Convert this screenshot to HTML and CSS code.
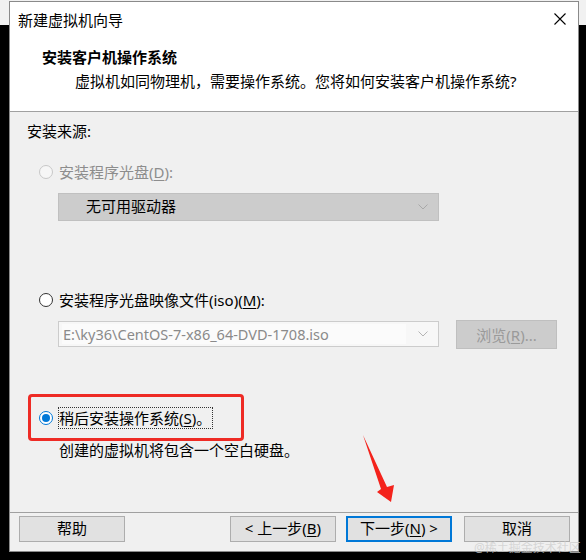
FILE: index.html
```html
<!DOCTYPE html>
<html lang="zh-CN">
<head>
<meta charset="utf-8">
<title>新建虚拟机向导</title>
<link rel="stylesheet" href="styles.css">
</head>
<body>
<div class="dialog">
  <div class="titlebar">
    <span class="title-text">新建虚拟机向导</span>
    <svg class="close" width="12" height="12" viewBox="0 0 12 12"><path d="M0.5 0.5 L11.5 11.5 M11.5 0.5 L0.5 11.5" stroke="#000" stroke-width="1.1" fill="none"/></svg>
  </div>
  <div class="header">
    <div class="h-title">安装客户机操作系统</div>
    <div class="h-sub">虚拟机如同物理机，需要操作系统。您将如何安装客户机操作系统?</div>
  </div>
  <div class="body">
    <div class="source-label">安装来源:</div>
    <div class="radio-row disabled">
      <span class="radio radio-disabled"></span>
      <span class="label">安装程序光盘(<u>D</u>):</span>
    </div>
    <div class="select select-disabled">
      <span class="select-text">无可用驱动器</span>
      <svg class="chev" width="10" height="6" viewBox="0 0 10 6"><path d="M0.5 0.5 L5 5 L9.5 0.5" stroke="#a8a8a8" fill="none"/></svg>
    </div>
    <div class="radio-row row2">
      <span class="radio"></span>
      <span class="label">安装程序光盘映像文件(iso)(<u>M</u>):</span>
    </div>
    <div class="combo-row">
      <div class="combo">
        <span class="combo-text">E:\ky36\CentOS-7-x86_64-DVD-1708.iso</span>
        <svg class="chev" width="10" height="6" viewBox="0 0 10 6"><path d="M0.5 0.5 L5 5 L9.5 0.5" stroke="#b4b4b4" fill="none"/></svg>
      </div>
      <div class="browse">浏览(<u>R</u>)...</div>
    </div>
    <div class="radio-row row3">
      <span class="radio radio-checked"><span class="dot"></span></span>
      <span class="label focus">稍后安装操作系统(<u>S</u>)。</span>
    </div>
    <div class="desc">创建的虚拟机将包含一个空白硬盘。</div>
  </div>
  <div class="footer">
    <div class="btn btn-help">帮助</div>
    <div class="btn btn-back">&lt; 上一步(<u>B</u>)</div>
    <div class="btn btn-next">下一步(<u>N</u>) &gt;</div>
    <div class="btn btn-cancel">取消</div>
  </div>
</div>
<div class="highlight"></div>
<svg class="arrow" width="586" height="560" viewBox="0 0 586 560"><polygon points="363,435 387,487 394,485 391,502 377,492 381,489" fill="#f4231c"/></svg>
<div class="watermark">@稀土掘金技术社区</div>
</body>
</html>
```
FILE: styles.css
```css
* { box-sizing: border-box; }
html, body { margin: 0; padding: 0; }
body {
  width: 586px;
  height: 560px;
  overflow: hidden;
  position: relative;
  background: linear-gradient(#f1f1f1 0 25px, #000 25px);
  font-family: "Noto Sans", "Noto Sans CJK SC", sans-serif;
  font-size: 15px;
  color: #000;
}
u { text-decoration: underline; text-underline-offset: 2px; text-decoration-thickness: 1px; }

.dialog {
  margin: 1px 0 0 9px;
  width: 570px;
  height: 551px;
  border: 1px solid #8a8a8a;
  background: #fff;
  display: flex;
  flex-direction: column;
}
.titlebar {
  height: 36px;
  flex: none;
  display: flex;
  align-items: center;
  padding-left: 8px;
  padding-right: 12px;
  justify-content: space-between;
  line-height: 36px;
}
.title-text { line-height: 20px; }
.close { margin-top: -2px; }

.header {
  height: 74px;
  flex: none;
  padding: 9px 0 0 32px;
  border-bottom: 1px solid #a0a0a0;
}
.h-title { font-weight: bold; line-height: 20px; height: 20px; }
.h-sub { margin-top: 4px; padding-left: 33px; line-height: 20px; height: 20px; }

.body {
  flex: 1;
  background: #f0f0f0;
  display: flex;
  flex-direction: column;
  border-bottom: 1px solid #a0a0a0;
}
.source-label { margin-top: 9px; padding-left: 17px; line-height: 20px; height: 20px; }

.radio-row {
  display: flex;
  align-items: center;
  height: 20px;
  margin-top: 21px;
  padding-left: 29px;
}
.radio-row.row2 { margin-top: 69px; }
.radio-row.row3 { margin-top: 59px; }
.radio {
  width: 14px;
  height: 14px;
  border-radius: 50%;
  border: 1px solid #333;
  background: #fff;
  flex: none;
  margin-right: 6px;
  display: flex;
  align-items: center;
  justify-content: center;
}
.radio-disabled { border-color: #c8c8c8; background: #f6f6f6; }
.radio-checked { border-color: #0078d7; }
.dot { width: 8px; height: 8px; border-radius: 50%; background: #0078d7; }
.label { line-height: 20px; }
.disabled .label { color: #8d8d8d; }
.focus { outline: 1px dotted #333; outline-offset: 0; padding-right: 1px; }

.select {
  margin: 11px 0 0 48px;
  width: 381px;
  height: 28px;
  display: flex;
  align-items: center;
  justify-content: space-between;
  padding: 0 10px 0 27px;
}
.select-text { line-height: 20px; margin-top: -2px; }
.select-disabled { background: #cccccc; border: 1px solid #c0c0c0; }

.combo-row {
  display: flex;
  align-items: flex-start;
  margin: 11px 0 0 48px;
}
.combo {
  width: 381px;
  height: 26px;
  border: 1px solid #cccccc;
  background: #f7f7f7;
  display: flex;
  align-items: center;
  justify-content: space-between;
  padding: 0 10px 0 3px;
}
.combo-text { color: #8a8a8a; font-size: 14.5px; line-height: 20px; background: #fbfbfb; flex: 1; padding-left: 1px; margin-right: 12px; }
.browse {
  margin-left: 17px;
  margin-top: -1px;
  width: 101px;
  height: 29px;
  background: #cccccc;
  border: 1px solid #bfbfbf;
  color: #9a9a9a;
  display: flex;
  align-items: center;
  justify-content: center;
}
.desc { margin-top: 12px; padding-left: 49px; line-height: 20px; height: 20px; }

.footer {
  height: 38px;
  flex: none;
  background: #f0f0f0;
  display: flex;
  align-items: flex-start;
  padding-top: 3px;
}
.btn {
  width: 106px;
  height: 26px;
  background: #e1e1e1;
  border: 1px solid #adadad;
  display: flex;
  align-items: center;
  justify-content: center;
  line-height: 20px;
  padding-bottom: 2px;
}
.btn-help { margin-left: 9px; }
.btn-back { margin-left: 105px; }
.btn-next { margin-left: 10px; border: 2px solid #0078d7; }
.btn-cancel { margin-left: 12px; }

.highlight {
  position: absolute;
  left: 28px;
  top: 394px;
  width: 216px;
  height: 47px;
  border: 3px solid #ee2b25;
  border-radius: 4px;
}
.arrow { position: absolute; left: 0; top: 0; }
.watermark {
  position: absolute;
  left: 474px;
  top: 540px;
  font-size: 12px;
  line-height: 16px;
  color: rgba(205, 205, 205, 0.75);
}
```
